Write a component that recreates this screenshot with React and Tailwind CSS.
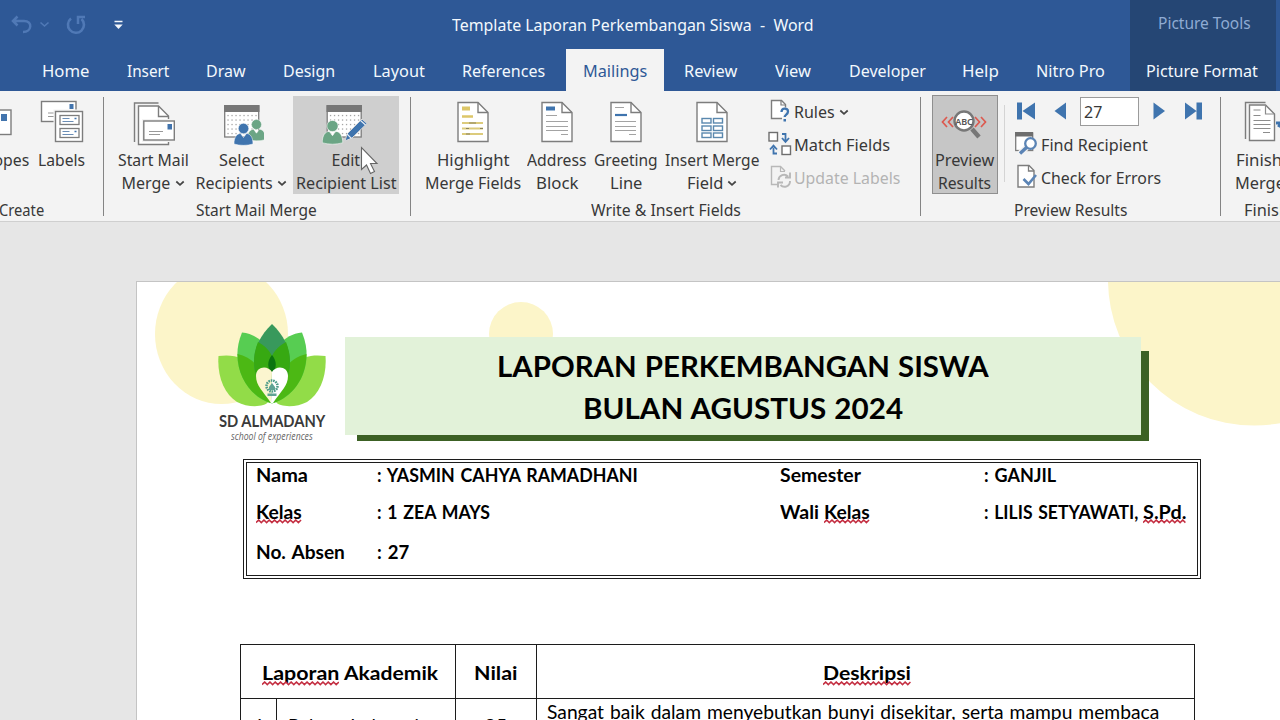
import React, { useLayoutEffect, useRef, useState } from "react";

/* Single line of text condensed or widened to a given advance width. */
function Fit({ w, className = "", wavy = false, children }) {
  const ref = useRef(null);
  const [scale, setScale] = useState(1);
  useLayoutEffect(() => {
    setScale(w / ref.current.offsetWidth);
  }, [w, children]);
  return (
    <span className={"relative block shrink-0 whitespace-nowrap " + className} style={{ width: w }}>
      <span ref={ref} className="inline-block origin-left" style={{ transform: `scaleX(${scale})` }}>
        {children}
      </span>
      {wavy && <Squiggle w={w} />}
    </span>
  );
}

function Squiggle({ w }) {
  const pts = [];
  for (let x = 0, i = 0; x <= w; x += 2.65, i++) pts.push(`${x},${i % 2 ? 1 : 3.6}`);
  return (
    <svg className="absolute left-0 top-full -mt-[5px]" width={w} height="5">
      <polyline points={pts.join(" ")} fill="none" stroke="#c42f42" strokeWidth="1.5" />
    </svg>
  );
}

/* Icons share one coordinate space so that the viewBox also fixes their place. */
function Icon({ x, y = 96, w, h = 53, children }) {
  return (
    <svg className="block shrink-0" width={w} height={h} viewBox={`${x} ${y} ${w} ${h}`} fill="none">
      {children}
    </svg>
  );
}

function Chevron() {
  return (
    <svg className="ml-[4px] shrink-0" width="10" height="7" viewBox="0 0 10 7" fill="none">
      <path d="M1.3 1.5 5 4.8 8.7 1.5" stroke="#444" strokeWidth="1.7" />
    </svg>
  );
}

function Sheet({ x, children }) {
  return (
    <g>
      <path d={`M${x} 102.5h20l10 10v29h-30z`} fill="#fff" stroke="#7d7d7d" strokeWidth="1.4" />
      <path d={`M${x + 20} 102.5v10h10`} stroke="#7d7d7d" strokeWidth="1.4" />
      {children}
    </g>
  );
}

function Person({ cx, cy, fill, s = 1 }) {
  return (
    <g transform={`translate(${cx} ${cy}) scale(${s})`}>
      <path d="M-9.5 15.5c0-7 3-10.500 6.500-10.500L0 9l3-4c3.500 0 6.500 3.500 6.500 10.500-6 1.800-13 1.800-19 0z" fill={fill} stroke="#fff" strokeWidth=".5" />
      <circle r="5.200" fill={fill} stroke="#fff" strokeWidth=".5" />
    </g>
  );
}

function Calendar({ x }) {
  const dots = [];
  for (let r = 0; r < 5; r++) for (let c = 0; c < 8; c++) dots.push([x + 4 + c * 4, 115.5 + r * 4.5]);
  return (
    <g>
      <rect x={x + 0.7} y="106" width="34" height="31" fill="#fff" stroke="#7d7d7d" strokeWidth="1.300" />
      <rect x={x} y="105" width="35.500" height="7" fill="#777" />
      {dots.map(([a, b]) => (
        <rect key={a + "-" + b} x={a - 0.6} y={b - 0.6} width="1.300" height="1.300" fill="#a5a5a5" />
      ))}
    </g>
  );
}

function Big({ className = "", icon, a, aw, b, bw, chevron }) {
  return (
    <div className={"flex h-[98px] shrink-0 flex-col items-center " + className}>
      {icon}
      {a && <Fit w={aw} className="leading-[23px]">{a}</Fit>}
      {b && (
        <div className="flex items-center leading-[23px]">
          <Fit w={bw}>{b}</Fit>
          {chevron && <Chevron />}
        </div>
      )}
    </div>
  );
}

function Group({ className, label, labelW, labelClass = "", children }) {
  return (
    <section className={"flex shrink-0 flex-col " + className}>
      <div className="flex h-[104px] pt-[5px]">{children}</div>
      <div className={"flex leading-[31px] " + labelClass}>
        <Fit w={labelW}>{label}</Fit>
      </div>
    </section>
  );
}

function Separator() {
  return <div className="mt-[6px] h-[119px] w-px shrink-0 bg-[#848484]" />;
}

function Header() {
  return (
    <header className="flex h-[91px] bg-[#2e5896] text-[16px] text-[#f3f8fd]">
      <div className="flex w-[1130px] flex-col">
        <div className="flex h-[49px] items-center">
          <svg className="ml-[8px] shrink-0" width="120" height="30" viewBox="8 9 120 30" fill="none">
            <path d="M17.500 15.500 13 20l4.500 4.500M13.500 20H24c9 0 8 11-1 11" stroke="#5079b6" strokeWidth="2.500" />
            <path d="m40.500 21.500 4 3.500 4-3.500" stroke="#5079b6" strokeWidth="1.600" />
            <path d="M71 17.500a8 8 0 1 0 10.500 .500" stroke="#5079b6" strokeWidth="2.600" />
            <path d="M78 23v-7h7" stroke="#5079b6" strokeWidth="2.500" />
            <path d="M114.500 20.500h8" stroke="#f2f6fb" strokeWidth="1.500" />
            <path d="M114.300 23.500h8.400l-4.200 4.500z" fill="#f2f6fb" />
          </svg>
          <Fit w={362} className="ml-[324px] pt-px">Template Laporan Perkembangan Siswa&nbsp; -&nbsp; Word</Fit>
        </div>
        <nav className="flex h-[42px] items-center [&>span]:pt-[2px]">
          <Fit w={48} className="ml-[42px]">Home</Fit>
          <Fit w={42} className="ml-[37px]">Insert</Fit>
          <Fit w={40} className="ml-[37px]">Draw</Fit>
          <Fit w={52} className="ml-[37px]">Design</Fit>
          <Fit w={52} className="ml-[38px]">Layout</Fit>
          <Fit w={83} className="ml-[37px]">References</Fit>
          <div className="ml-[21px] flex h-full w-[98px] items-center justify-center bg-[#f3f3f3] pt-[2px] text-[#2e5896]">
            <Fit w={64}>Mailings</Fit>
          </div>
          <Fit w={53} className="ml-[20px]">Review</Fit>
          <Fit w={36} className="ml-[38px]">View</Fit>
          <Fit w={77} className="ml-[38px]">Developer</Fit>
          <Fit w={37} className="ml-[36px]">Help</Fit>
          <Fit w={69} className="ml-[37px]">Nitro Pro</Fit>
        </nav>
      </div>
      <div className="flex w-[146px] flex-col items-center bg-[#254674]">
        <Fit w={93} className="ml-[2px] leading-[46px] text-[#8fabd3]">Picture Tools</Fit>
        <Fit w={112} className="mt-[3px] -ml-[2px] leading-[44px]">Picture Format</Fit>
      </div>
    </header>
  );
}

function CreateGroup() {
  return (
    <Group className="w-[103px] overflow-hidden" label="Create" labelW={45} labelClass="-ml-px pt-px">
      <div className="flex w-[30px] flex-col">
        <Icon x={0} w={30}>
          <rect x="-20" y="110" width="31" height="24.500" fill="#fff" stroke="#7d7d7d" strokeWidth="1.400" />
          <rect x="1" y="114" width="6" height="7" fill="#4274ad" />
        </Icon>
        <div className="flex justify-end pr-px leading-[23px]"><Fit w={75}>Envelopes</Fit></div>
      </div>
      <Big
        className="ml-[6px] w-[50px]"
        a="Labels"
        aw={47}
        icon={
          <Icon x={36} w={50}>
            <rect x="41.500" y="101.500" width="34.500" height="20" fill="#fff" stroke="#7d7d7d" strokeWidth="1.400" />
            <rect x="69.500" y="104" width="4" height="5" fill="#4274ad" />
            <path d="M48 113h6M48 116.500h6" stroke="#999" strokeWidth="1.100" />
            <rect x="53.500" y="109.500" width="31" height="33" fill="#f3f3f3" />
            <rect x="55.500" y="111.500" width="27" height="30" fill="#fff" stroke="#7d7d7d" strokeWidth="1.400" />
            <rect x="60" y="115.500" width="19" height="9" stroke="#7d7d7d" strokeWidth="1.300" />
            <rect x="60" y="128.500" width="19" height="9" stroke="#7d7d7d" strokeWidth="1.300" />
            <path d="M62.500 118.500h7M62.500 121.500h11M62.500 131.500h7M62.500 134.500h11" stroke="#6b8db5" strokeWidth="1.200" />
            <path d="M74.500 118.500h2M74.500 131.500h2" stroke="#4274ad" strokeWidth="1.600" />
          </Icon>
        }
      />
    </Group>
  );
}

function StartGroup() {
  return (
    <Group className="w-[306px]" label="Start Mail Merge" labelW={121} labelClass="pl-[92px] pt-px">
      <Big
        className="ml-[12px] w-[74px]"
        a="Start Mail"
        aw={71}
        b="Merge"
        bw={49}
        chevron
        icon={
          <Icon x={131} w={44}>
            <path d="M134.500 142v-39h24" stroke="#7d7d7d" strokeWidth="1.400" />
            <path d="M138.500 106h20l10 10v28.500h-30z" fill="#fff" stroke="#7d7d7d" strokeWidth="1.400" />
            <path d="M158.500 106v10.500h10" stroke="#7d7d7d" strokeWidth="1.400" />
            <rect x="142" y="119" width="34" height="23" fill="#f3f3f3" />
            <rect x="143.800" y="121" width="30.500" height="19" fill="#fff" stroke="#7d7d7d" strokeWidth="1.400" />
            <rect x="167.500" y="124" width="4.500" height="5.500" fill="#4274ad" />
            <path d="M149 131.500h14M149 134.500h11" stroke="#999" strokeWidth="1.100" />
          </Icon>
        }
      />
      <Big
        className="ml-[5px] w-[92px]"
        a="Select"
        aw={45}
        b="Recipients"
        bw={77}
        chevron
        icon={
          <Icon x={218} w={46}>
            <Calendar x={224} />
            <Person cx={256.5} cy={124.5} fill="#6ba585" s={0.97} />
            <Person cx={243.5} cy={128.5} fill="#3f74ae" s={1} />
          </Icon>
        }
      />
      <Big
        className="ml-[6px] w-[106px] bg-[#cfcfcf]"
        a="Edit"
        aw={29}
        b="Recipient List"
        bw={101}
        icon={
          <Icon x={322} w={48}>
            <Calendar x={326.5} />
            <Person cx={332.5} cy={126} fill="#6ba585" s={1.08} />
            <path d="m347 134 15-15 5 4.500-15 14.500-7 3z" fill="#3f74ae" stroke="#d8d8d8" strokeWidth="1" />
            <path d="m347 134 4.500 4.500M360.500 120.500l5 4.500" stroke="#e6edf5" strokeWidth="1.100" />
          </Icon>
        }
      />
    </Group>
  );
}

function WriteGroup() {
  return (
    <Group className="w-[509px]" label="Write & Insert Fields" labelW={150} labelClass="pl-[180px]">
      <Big
        className="ml-[13px] w-[98px]"
        a="Highlight"
        aw={72}
        b="Merge Fields"
        bw={96}
        icon={
          <Icon x={457} w={32}>
            <Sheet x={458}>
              <rect x="462" y="106.500" width="8" height="4" fill="#dcc668" />
              <path d="M462 116.500h11" stroke="#dcc668" strokeWidth="2.500" />
              <path d="M462 123h21M462 128.500h21M462 134h21" stroke="#dccb7c" strokeWidth="1.800" />
              <path d="M469 123h7M466 128.500h3M480 128.500h3M466 134h4" stroke="#8a8360" strokeWidth="1.200" />
            </Sheet>
          </Icon>
        }
      />
      <Big
        className="ml-[4px] w-[62px]"
        a="Address"
        aw={60}
        b="Block"
        bw={42}
        icon={
          <Icon x={541} w={32}>
            <Sheet x={542}>
              <rect x="546" y="106.500" width="9" height="4" fill="#3f74ae" />
              <path d="M546 115.500h11M546 121.500h22M546 126.500h22M546 130.500h22M561 134.500h7" stroke="#a3a3a3" strokeWidth="1.100" />
            </Sheet>
          </Icon>
        }
      />
      <Big
        className="ml-[5px] w-[66px]"
        a="Greeting"
        aw={64}
        b="Line"
        bw={32}
        icon={
          <Icon x={610} w={32}>
            <Sheet x={611}>
              <path d="M615 107.500h9M615 121.500h21M615 126.500h21M615 130.500h21M629 134.500h7" stroke="#a3a3a3" strokeWidth="1.100" />
              <path d="M615 115h12" stroke="#3f74ae" strokeWidth="2.200" />
            </Sheet>
          </Icon>
        }
      />
      <Big
        className="ml-[4px] w-[98px]"
        a="Insert Merge"
        aw={94}
        b="Field"
        bw={36}
        chevron
        icon={
          <Icon x={695} w={32}>
            <Sheet x={696}>
              {[118.5, 126, 133].map((y) => (
                <g key={y} stroke="#5a88ae" strokeWidth="1.400">
                  <rect x="701" y={y} width="9" height="4.500" />
                  <rect x="712.500" y={y} width="9" height="4.500" />
                </g>
              ))}
            </Sheet>
          </Icon>
        }
      />
      <div className="ml-[7px] flex flex-col">
        <div className="flex h-[33px] items-center leading-[31px]">
          <Icon x={767} y={96} w={26} h={33}>
            <path d="M781 118.500h-10.500v-18h10l4 4v3" fill="#fff" stroke="#7d7d7d" strokeWidth="1.400" />
            <path d="M780 100.500v4.500h4.500" stroke="#7d7d7d" strokeWidth="1.200" />
            <path d="M780.500 112c0-4.500 6.500-4.500 6.500-.500 0 3-3.300 3-3.300 5.500" stroke="#3f74ae" strokeWidth="2.300" />
            <rect x="782.500" y="119" width="2.500" height="2.500" fill="#3f74ae" />
          </Icon>
          <Fit w={41}>Rules</Fit>
          <Chevron />
        </div>
        <div className="flex h-[33px] items-center leading-[31px]">
          <Icon x={767} y={129} w={26} h={33}>
            <rect x="768" y="132.500" width="8.500" height="8.500" fill="#fff" stroke="#6e6e6e" strokeWidth="1.400" />
            <rect x="781" y="146" width="8.500" height="8.500" fill="#fff" stroke="#6e6e6e" strokeWidth="1.400" />
            <path d="M781 134h3.500v7M781 138l3.500 4 3.500-4" stroke="#3f74ae" strokeWidth="1.800" />
            <path d="M776 153.500h-3.500v-6M769 149.500l3.500-4 3.500 4" stroke="#3f74ae" strokeWidth="1.800" />
          </Icon>
          <Fit w={96}>Match Fields</Fit>
        </div>
        <div className="flex h-[33px] items-center leading-[31px] text-[#b3b3b3]">
          <Icon x={767} y={162} w={26} h={33}>
            <path d="M777 184.500h-6.500v-18h9l4.500 4.500" stroke="#b8b8b8" strokeWidth="1.400" />
            <path d="M779.500 166.500v5h4.500" stroke="#b8b8b8" strokeWidth="1.200" />
            <path d="M777.500 180a5.500 5.500 0 0 1 9.500-3.500M789 172.500v5h-5M789 181a5.500 5.500 0 0 1-9.500 4M777 187.500v-5h5" stroke="#b8b8b8" strokeWidth="1.900" />
          </Icon>
          <Fit w={106}>Update Labels</Fit>
        </div>
      </div>
    </Group>
  );
}

function PreviewGroup() {
  return (
    <Group className="w-[299px]" label="Preview Results" labelW={113} labelClass="pl-[93px]">
      <div className="-mt-px ml-[11px] flex h-[99px] w-[66px] flex-col items-center border border-[#8f8f8f] bg-[#c6c6c6]">
        <Icon x={942} w={48}>
          <path d="m948 117-4.500 5 4.500 5M954 117l-4.500 5 4.500 5M976 117l4.500 5-4.500 5M982 117l4.500 5-4.500 5" stroke="#dc5a50" strokeWidth="1.700" />
          <path d="m973 129 7 8" stroke="#777" strokeWidth="4.500" />
          <circle cx="965" cy="121" r="9.500" fill="#fff" stroke="#777" strokeWidth="2.400" />
          <text x="965" y="124.500" textAnchor="middle" className="font-['Noto_Sans',sans-serif] text-[9px] font-semibold" fill="#555">ABC</text>
        </Icon>
        <Fit w={59} className="-ml-px leading-[23px]">Preview</Fit>
        <Fit w={53} className="-ml-px leading-[22px]">Results</Fit>
      </div>
      <div className="ml-[6px] mt-[9px] h-[77px] w-px bg-[#d4d4d4]" />
      <div className="ml-[9px] flex flex-col">
        <div className="flex h-[33px] items-start">
          <Icon x={1014} y={96} w={66} h={33}>
            <path d="M1017 102.500h5v17h-5zM1035 102.500v17l-12.500-8.500z" fill="#3f74ae" />
            <path d="M1066 102.500v17l-11.500-8.500z" fill="#3f74ae" />
          </Icon>
          <div className="mt-[1px] flex h-[29px] w-[59px] items-center border border-[#9b9b9b] bg-white pl-[3px]">
            <Fit w={18}>27</Fit>
          </div>
          <Icon x={1139} y={96} w={66} h={33}>
            <path d="M1153.500 102.500v17l11.500-8.500z" fill="#3f74ae" />
            <path d="M1185 102.500v17l11.500-8.500zM1196.500 102.500h5.500v17h-5.500z" fill="#3f74ae" />
          </Icon>
        </div>
        <div className="flex h-[33px] items-center leading-[31px]">
          <Icon x={1014} y={129} w={26} h={33}>
            <rect x="1015.700" y="133" width="17" height="17.500" fill="#fff" stroke="#7d7d7d" strokeWidth="1.300" />
            <rect x="1015" y="132" width="18" height="4.500" fill="#6e6e6e" />
            <path d="m1027 147-7.500 7" stroke="#f3f3f3" strokeWidth="6" />
            <circle cx="1030.500" cy="143.500" r="5.300" fill="#fff" stroke="#5b84b5" strokeWidth="2.300" />
            <path d="m1026.500 147.500-6.500 6" stroke="#5b84b5" strokeWidth="3.400" />
          </Icon>
          <Fit w={107} className="ml-[1px]">Find Recipient</Fit>
        </div>
        <div className="flex h-[33px] items-center leading-[31px]">
          <Icon x={1014} y={162} w={26} h={33}>
            <path d="M1018 165.500h11l5 5v16.500h-16z" fill="#fff" stroke="#7d7d7d" strokeWidth="1.400" />
            <path d="M1028.500 165.500v5.500h5.500" stroke="#7d7d7d" strokeWidth="1.300" />
            <path d="m1023.500 179 5 5 7.500-9" stroke="#5b84b5" strokeWidth="2.600" />
          </Icon>
          <Fit w={120} className="ml-[1px]">Check for Errors</Fit>
        </div>
      </div>
    </Group>
  );
}

function FinishGroup() {
  return (
    <Group className="w-[80px]" label="Finish" labelW={45} labelClass="pl-[23px] pt-px">
      <Big
        className="ml-[13px] w-[66px]"
        a="Finish &"
        aw={63}
        b="Merge"
        bw={50}
        chevron
        icon={
          <Icon x={1234} w={66}>
            <path d="M1245.500 139v-36.500h20" stroke="#7d7d7d" strokeWidth="1.400" />
            <path d="M1249.500 105h16l9 9v26.500h-25z" fill="#fff" stroke="#7d7d7d" strokeWidth="1.400" />
            <path d="M1265.500 105v9h9M1253.500 110h7M1253.500 115.500h7M1253.500 120.500h17M1253.500 124.500h17M1253.500 128.500h17M1263 132.500h7" stroke="#8c8c8c" strokeWidth="1.200" />
            <path d="M1276 123h10M1278.500 127l5 -9" stroke="#3f74ae" strokeWidth="3" />
          </Icon>
        }
      />
    </Group>
  );
}

function Logo() {
  return (
    <svg width="112" height="84" viewBox="216 323 112 84" fill="none">
      <g>
        <path d="M218.500 356c20-3 44 4 49.500 46-3 5-20 6-31 0-13-8-20-26-18.500-46z" fill="#92dc48" />
        <path d="M325.500 356c-20-3-44 4-49.500 46 3 5 20 6 31 0 13-8 20-26 18.500-46z" fill="#92dc48" />
        <path d="M242 332.500c19 2 30 18 32 30l-2 41c-24-6-44-38-30-71z" fill="#57cd52" />
        <path d="M302 332.500c-19 2-30 18-32 30l2 41c24-6 44-38 30-71z" fill="#57cd52" />
        <path d="M237.500 354c18 4 30 20 33 49-18-6-33-24-33-49zM306.500 354c-18 4-30 20-33 49 18-6 33-24 33-49z" fill="#4cb814" />
        <path d="M272 324c-23 22-25 50 0 79 25-29 23-57 0-79z" fill="#38995c" />
        <path d="M258 342c7 4 11 8 14 14 3-6 7-10 14-14 9 22 2 44-14 61-16-17-23-39-14-61z" fill="#37a912" />
        <path d="M272 355c-5 6-5 13 0 19 5-6 5-13 0-19z" fill="#0b7410" />
        <path d="M272 372c-4-7-16-6-16 4 0 10 7 15 15 27z" fill="#fbf5cf" />
        <path d="M272 372c4-7 16-6 16 4 0 10-7 15-15 27l-2 0z" fill="#fff" />
      </g>
      <circle cx="272" cy="386" r="5.500" stroke="#4c9b89" strokeWidth="2.500" strokeDasharray="1.600 .8" />
      <path d="M269 387l3-4 3 4v3h-6zM267.500 393.500h9v2.500h-9z" fill="#5fa394" />
    </svg>
  );
}

function Info({ className = "", children }) {
  return <div className={"flex items-center " + className}>{children}</div>;
}

function Page() {
  return (
    <main className="relative ml-[136px] h-[439px] w-[1144px] overflow-hidden border-l border-t border-[#c4c4c4] bg-white font-[Lato,sans-serif] text-black">
      <svg className="absolute left-0 top-0" width="1143" height="160" viewBox="137 282 1143 160">
        <ellipse cx="221.500" cy="334" rx="66.500" ry="70" fill="#fcf5c9" />
        <circle cx="521" cy="334" r="32" fill="#fcf5c9" />
        <circle cx="1254" cy="279.500" r="146" fill="#fcf5c9" />
      </svg>
      <div className="relative flex h-[177px] items-start">
        <div className="ml-[79px] mt-[41px] flex w-[112px] flex-col items-center">
          <Logo />
          <Fit w={106} className="mt-[5px] text-[17.5px] font-bold leading-[18px] text-[#3a3a3a]">SD ALMADANY</Fit>
          <Fit w={82} className="mt-px font-['Open_Sans',sans-serif] text-[10.5px] italic leading-[10px] text-[#666]">school of experiences</Fit>
        </div>
        <div className="relative ml-[17px] mt-[55px] h-[104px] w-[804px]">
          <div className="absolute bottom-0 left-[12px] h-[90px] w-[792px] bg-[#3c6124]" />
          <div className="relative flex h-[98px] w-[796px] flex-col items-center bg-[#e2f2d9] pt-[8px] text-[28.5px] font-bold leading-[42px] [word-spacing:1px]">
            <Fit w={492}>LAPORAN PERKEMBANGAN SISWA</Fit>
            <Fit w={320}>BULAN AGUSTUS 2024</Fit>
          </div>
        </div>
      </div>
      <div className="relative ml-[106px] flex h-[120px] w-[958px] flex-col border-4 border-double border-[#1c1c1c] pl-[9px] text-[18px] font-bold leading-[24px] [word-spacing:1.5px]">
        <Info className="h-[24px]">
          <Fit w={52}>Nama</Fit>
          <Fit w={261} className="ml-[69px]">: YASMIN CAHYA RAMADHANI</Fit>
          <Fit w={81} className="ml-[142px]">Semester</Fit>
          <Fit w={72} className="ml-[123px]">: GANJIL</Fit>
        </Info>
        <Info className="mt-[12px] h-[26px]">
          <Fit w={46} wavy>Kelas</Fit>
          <Fit w={113} className="ml-[75px]">: 1 ZEA MAYS</Fit>
          <Fit w={39} className="ml-[290px]">Wali</Fit>
          <Fit w={46} wavy className="ml-[5px]">Kelas</Fit>
          <Fit w={154} className="ml-[114px]">: LILIS SETYAWATI,</Fit>
          <Fit w={43} wavy className="ml-[5px]">S.Pd.</Fit>
        </Info>
        <Info className="mt-[14px] h-[26px]">
          <Fit w={89}>No. Absen</Fit>
          <Fit w={32} className="ml-[32px]">: 27</Fit>
        </Info>
      </div>
      <div className="relative ml-[103px] mt-[65px] flex h-[100px] w-[955px] flex-col border border-[#1c1c1c] text-[19.5px]">
        <div className="flex h-[54px] border-b border-[#1c1c1c] font-bold leading-[26px]">
          <div className="flex w-[215px] items-center justify-center gap-[5px] border-r border-[#1c1c1c] pl-[3px] pt-[2px]">
            <Fit w={77} wavy>Laporan</Fit>
            <Fit w={94}>Akademik</Fit>
          </div>
          <div className="flex w-[81px] items-center justify-center border-r border-[#1c1c1c] pt-[2px]">
            <Fit w={44}>Nilai</Fit>
          </div>
          <div className="flex grow items-center justify-center pl-[3px] pt-[2px]">
            <Fit w={88} wavy>Deskripsi</Fit>
          </div>
        </div>
        <div className="flex grow">
          <div className="flex w-[36px] justify-center border-r border-[#1c1c1c] pt-[12px]"><Fit w={10}>1</Fit></div>
          <div className="flex w-[179px] border-r border-[#1c1c1c] pl-[11px] pt-[12px]"><Fit w={140}>Bahasa Indonesia</Fit></div>
          <div className="flex w-[81px] justify-center border-r border-[#1c1c1c] pt-[12px]"><Fit w={23}>85</Fit></div>
          <div className="pl-[10px] text-[18.5px] leading-[27px] [word-spacing:1px]">
            <Fit w={612}>Sangat baik dalam menyebutkan bunyi disekitar, serta mampu membaca</Fit>
          </div>
        </div>
      </div>
    </main>
  );
}

export default function App() {
  return (
    <div className="relative h-[720px] w-[1280px] overflow-hidden bg-[#e6e6e6] font-['Noto_Sans',sans-serif]">
      <Header />
      <div className="flex h-[131px] overflow-hidden border-b border-[#cfcfcf] bg-[#f3f3f3] text-[16px] text-[#383838]">
        <CreateGroup />
        <Separator />
        <StartGroup />
        <Separator />
        <WriteGroup />
        <Separator />
        <PreviewGroup />
        <Separator />
        <FinishGroup />
      </div>
      <div className="h-[59px]" />
      <Page />
      <svg className="absolute left-[360px] top-[146px]" width="20" height="30" viewBox="0 0 20 30">
        <path d="M1.500 1.500v22l5-4.500 4 8.500 4-2-4-8h6.500z" fill="#fff" stroke="#666" strokeWidth="1.100" />
      </svg>
    </div>
  );
}
